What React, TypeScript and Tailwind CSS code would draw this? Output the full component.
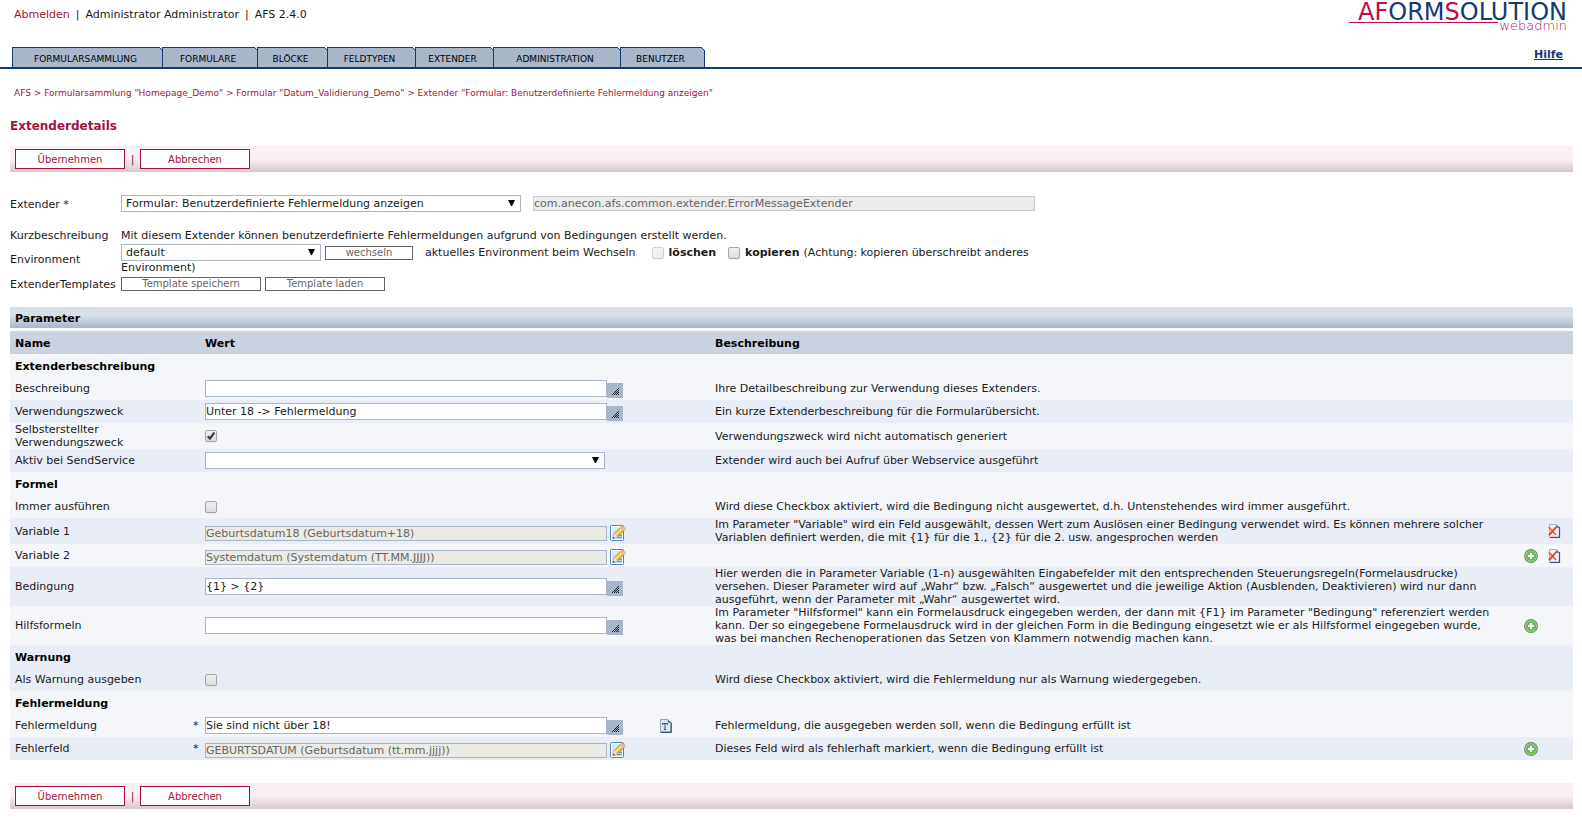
import React, { useState } from "react";

interface Tab {
  label: string;
  width: string;
}

type FieldKind =
  | "heading"
  | "text"
  | "select"
  | "checkbox"
  | "reference";

interface ParameterRow {
  id: string;
  label: string;
  kind: FieldKind;
  value?: string;
  checked?: boolean;
  required?: boolean;
  translatable?: boolean;
  description?: string;
  canAdd?: boolean;
  canDelete?: boolean;
  shaded?: boolean;
}

const TABS: Tab[] = [
  { label: "FORMULARSAMMLUNG", width: "w-[150px]" },
  { label: "FORMULARE", width: "w-[95px]" },
  { label: "BLÖCKE", width: "w-[70px]" },
  { label: "FELDTYPEN", width: "w-[88px]" },
  { label: "EXTENDER", width: "w-[78px]" },
  { label: "ADMINISTRATION", width: "w-[127px]" },
  { label: "BENUTZER", width: "w-[85px]" },
];

const BREADCRUMB = [
  "AFS",
  'Formularsammlung "Homepage_Demo"',
  'Formular "Datum_Validierung_Demo"',
  'Extender "Formular: Benutzerdefinierte Fehlermeldung anzeigen"',
];

const ROWS: ParameterRow[] = [
  { id: "h-extender", label: "Extenderbeschreibung", kind: "heading" },
  {
    id: "beschreibung",
    label: "Beschreibung",
    kind: "text",
    description: "Ihre Detailbeschreibung zur Verwendung dieses Extenders.",
  },
  {
    id: "verwendungszweck",
    label: "Verwendungszweck",
    kind: "text",
    value: "Unter 18 -> Fehlermeldung",
    description: "Ein kurze Extenderbeschreibung für die Formularübersicht.",
    shaded: true,
  },
  {
    id: "selbsterstellt",
    label: "Selbsterstellter Verwendungszweck",
    kind: "checkbox",
    checked: true,
    description: "Verwendungszweck wird nicht automatisch generiert",
  },
  {
    id: "sendservice",
    label: "Aktiv bei SendService",
    kind: "select",
    description: "Extender wird auch bei Aufruf über Webservice ausgeführt",
    shaded: true,
  },
  { id: "h-formel", label: "Formel", kind: "heading" },
  {
    id: "immer",
    label: "Immer ausführen",
    kind: "checkbox",
    description:
      "Wird diese Checkbox aktiviert, wird die Bedingung nicht ausgewertet, d.h. Untenstehendes wird immer ausgeführt.",
  },
  {
    id: "variable1",
    label: "Variable 1",
    kind: "reference",
    value: "Geburtsdatum18 (Geburtsdatum+18)",
    description:
      'Im Parameter "Variable" wird ein Feld ausgewählt, dessen Wert zum Auslösen einer Bedingung verwendet wird. Es können mehrere solcher Variablen definiert werden, die mit {1} für die 1., {2} für die 2. usw. angesprochen werden',
    canDelete: true,
    shaded: true,
  },
  {
    id: "variable2",
    label: "Variable 2",
    kind: "reference",
    value: "Systemdatum (Systemdatum (TT.MM.JJJJ))",
    canAdd: true,
    canDelete: true,
  },
  {
    id: "bedingung",
    label: "Bedingung",
    kind: "text",
    value: "{1} > {2}",
    description:
      "Hier werden die in Parameter Variable (1-n) ausgewählten Eingabefelder mit den entsprechenden Steuerungsregeln(Formelausdrucke) versehen. Dieser Parameter wird auf „Wahr“ bzw. „Falsch“ ausgewertet und die jeweilige Aktion (Ausblenden, Deaktivieren) wird nur dann ausgeführt, wenn der Parameter mit „Wahr“ ausgewertet wird.",
    shaded: true,
  },
  {
    id: "hilfsformeln",
    label: "Hilfsformeln",
    kind: "text",
    description:
      'Im Parameter "Hilfsformel" kann ein Formelausdruck eingegeben werden, der dann mit {F1} im Parameter "Bedingung" referenziert werden kann. Der so eingegebene Formelausdruck wird in der gleichen Form in die Bedingung eingesetzt wie er als Hilfsformel eingegeben wurde, was bei manchen Rechenoperationen das Setzen von Klammern notwendig machen kann.',
    canAdd: true,
  },
  { id: "h-warnung", label: "Warnung", kind: "heading", shaded: true },
  {
    id: "warnung",
    label: "Als Warnung ausgeben",
    kind: "checkbox",
    description:
      "Wird diese Checkbox aktiviert, wird die Fehlermeldung nur als Warnung wiedergegeben.",
    shaded: true,
  },
  { id: "h-fehler", label: "Fehlermeldung", kind: "heading" },
  {
    id: "fehlermeldung",
    label: "Fehlermeldung",
    kind: "text",
    value: "Sie sind nicht über 18!",
    required: true,
    translatable: true,
    description:
      "Fehlermeldung, die ausgegeben werden soll, wenn die Bedingung erfüllt ist",
  },
  {
    id: "fehlerfeld",
    label: "Fehlerfeld",
    kind: "reference",
    value: "GEBURTSDATUM (Geburtsdatum (tt.mm.jjjj))",
    required: true,
    description:
      "Dieses Feld wird als fehlerhaft markiert, wenn die Bedingung erfüllt ist",
    canAdd: true,
    shaded: true,
  },
];

function EditIcon() {
  return (
    <svg width="16" height="16" viewBox="0 0 16 16" aria-hidden="true">
      <defs>
        <linearGradient id="edit-page" x1="0" y1="0" x2="1" y2="1">
          <stop offset="0" stopColor="#e6f1fd" />
          <stop offset="1" stopColor="#a5d3fb" />
        </linearGradient>
      </defs>
      <rect x=".5" y=".5" width="13" height="15" rx="1" fill="#ffffff" stroke="#4a86cc" />
      <rect x="2" y="2" width="10" height="12" fill="url(#edit-page)" />
      <path d="M7 12.5h5M9 10.5h3" stroke="#3fa9ee" />
      <path d="M2.8 13.4l1.2-4.6L11 1.9c.8-.8 1.9-.7 2.6 0l.8.8c.7.8.7 1.7 0 2.5l-7 6.9z" fill="#f2b03a" stroke="#b8813a" strokeWidth=".7" />
      <path d="M4.6 9.6l6.6-6.5 1.3 1.3-6.6 6.5z" fill="#fbe08a" />
      <path d="M11 1.9c.8-.8 1.9-.7 2.6 0l.8.8c.7.8.7 1.7 0 2.5l-.9.9-3.4-3.3z" fill="#efb98a" />
      <path d="M2.8 13.4L4 8.8l3.4 3.3z" fill="#f8e2c0" />
      <path d="M2.8 13.4l.5-1.9 1.4 1.4z" fill="#4a3b2a" />
    </svg>
  );
}

function AddIcon() {
  return (
    <svg width="14" height="14" viewBox="0 0 14 14" aria-hidden="true">
      <defs>
        <linearGradient id="add-fill" x1="0" y1="0" x2="0" y2="1">
          <stop offset="0" stopColor="#7cae74" />
          <stop offset="1" stopColor="#62bd45" />
        </linearGradient>
      </defs>
      <circle cx="7" cy="7" r="6.4" fill="#b5d8a8" stroke="#5a9a50" strokeWidth="1.1" />
      <circle cx="7" cy="7" r="5.1" fill="url(#add-fill)" />
      <path d="M6 4h2v2h2v2H8v2H6V8H4V6h2z" fill="#ffffff" />
    </svg>
  );
}

function DeleteIcon() {
  return (
    <svg width="13" height="14" viewBox="0 0 13 14" aria-hidden="true">
      <path d="M1.5.5h6.8l3.2 3.2v9.3h-10z" fill="#eef3fb" stroke="#a3b3cf" />
      <path d="M8.3.5v3.2h3.2z" fill="#4b6186" />
      <path d="M11.5 3v10.5H2" fill="none" stroke="#3a5273" strokeWidth="1.2" />
      <path d="M.8 3.2l7.2 7.6" stroke="#f4694a" strokeWidth="1.9" />
      <path d="M8.2 3L1 11.4" stroke="#ea3d1f" strokeWidth="1.9" />
    </svg>
  );
}

function TranslateIcon() {
  return (
    <svg width="12" height="14" viewBox="0 0 12 14" aria-hidden="true">
      <path d="M.5.5h7.3l3.2 3.2V13H.5z" fill="#dfe8f4" stroke="#8fa3c2" />
      <path d="M7.8.5v3.2H11z" fill="#4b6186" />
      <path d="M11.2 3.8v9.5H.6" fill="none" stroke="#3a5273" strokeWidth="1.2" />
      <path d="M2.5 6V4.5h5V6M5 4.5v6M3.8 10.5h2.4" fill="none" stroke="#3c4f6d" />
    </svg>
  );
}

function ResizeIcon() {
  return (
    <svg width="7" height="7" viewBox="0 0 7 7" shapeRendering="crispEdges" aria-hidden="true">
      <path
        d="M6 0h1v1H6zM5 1h1v1H5zM4 2h1v1H4zM6 2h1v1H6zM3 3h1v1H3zM5 3h1v1H5zM2 4h1v1H2zM4 4h1v1H4zM6 4h1v1H6zM1 5h1v1H1zM3 5h1v1H3zM5 5h1v1H5zM0 6h1v1H0zM2 6h1v1H2zM4 6h1v1H4zM6 6h1v1H6z"
        fill="#14181f"
      />
    </svg>
  );
}

interface CheckboxProps {
  id: string;
  defaultChecked?: boolean;
  disabled?: boolean;
}

function Checkbox({ id, defaultChecked = false, disabled = false }: CheckboxProps) {
  return (
    <span className="relative inline-block h-3 w-3 align-middle">
      <input
        type="checkbox"
        id={id}
        defaultChecked={defaultChecked}
        disabled={disabled}
        className="peer block h-3 w-3 appearance-none rounded-xs border border-[#a6a6a6] bg-linear-to-b from-[#eeeeee] to-[#dcdcdc] shadow-xs disabled:border-[#d2d2d2] disabled:from-[#f4f4f4] disabled:to-[#ededed]"
      />
      <svg
        viewBox="0 0 12 12"
        aria-hidden="true"
        className="pointer-events-none absolute inset-0 hidden h-3 w-3 peer-checked:block"
      >
        <path d="M2.8 6.2l2.2 2.4 4.3-6" fill="none" stroke="#3c3c3c" strokeWidth="2.2" />
      </svg>
    </span>
  );
}

interface SelectBoxProps {
  id: string;
  options: string[];
  className: string;
}

function SelectBox({ id, options, className }: SelectBoxProps) {
  return (
    <span className={`relative inline-block align-middle ${className}`}>
      <select
        id={id}
        className="block h-[17px] w-full appearance-none border border-[#a9b6ca] bg-white pl-1 leading-[15px]"
      >
        {options.map((option) => (
          <option key={option}>{option}</option>
        ))}
      </select>
      <svg
        width="7"
        height="6"
        viewBox="0 0 7 6"
        aria-hidden="true"
        className="pointer-events-none absolute top-[5px] right-1.5"
      >
        <path d="M0 0h7L4 6H3z" fill="#000000" />
      </svg>
    </span>
  );
}

function ActionBar() {
  return (
    <div className="flex h-[26px] items-center bg-linear-to-b from-[#faeff3] from-50% to-[#d5c9cd] pl-[5px] text-[10px] text-[#a3123f]">
      <button type="button" className="h-5 w-[110px] border border-[#a3123f] bg-white">
        Übernehmen
      </button>
      <span className="w-[15px] text-center text-[11px]">|</span>
      <button type="button" className="h-5 w-[110px] border border-[#a3123f] bg-white">
        Abbrechen
      </button>
    </div>
  );
}

function FieldControl({ row }: { row: ParameterRow }) {
  if (row.kind === "select") {
    return <SelectBox id={row.id} options={[""]} className="w-[400px]" />;
  }
  if (row.kind === "checkbox") {
    return <Checkbox id={row.id} defaultChecked={row.checked} />;
  }
  if (row.kind === "reference") {
    return (
      <div className="flex items-end gap-[3px] pt-[3px]">
        <input
          type="text"
          id={row.id}
          disabled
          defaultValue={row.value}
          className="h-[15px] w-[402px] border border-[#a9b6ca] bg-[#ebebe4] text-[#666666]"
        />
        <button type="button" aria-label={`${row.label} bearbeiten`}>
          <EditIcon />
        </button>
      </div>
    );
  }
  return (
    <div className="flex items-center">
      <input
        type="text"
        id={row.id}
        defaultValue={row.value ?? ""}
        className="h-[17px] w-[402px] border border-[#a9b6ca] bg-white pb-px"
      />
      <button
        type="button"
        aria-label={`${row.label} vergrößern`}
        className="mt-1 flex h-[15px] w-4 items-end justify-end bg-[#a9b6ca] pr-1 pb-[3px]"
      >
        <ResizeIcon />
      </button>
    </div>
  );
}

function ParameterTable() {
  return (
    <table className="mt-[3px] w-full table-fixed border-collapse text-left">
      <colgroup>
        <col className="w-[177px]" />
        <col className="w-[18px]" />
        <col className="w-[450px]" />
        <col className="w-[60px]" />
        <col />
        <col className="w-6" />
        <col className="w-7" />
      </colgroup>
      <thead>
        <tr className="h-[23px] bg-[#cad1df] text-black">
          <th className="p-0 pt-px pl-[5px]" colSpan={2}>Name</th>
          <th className="p-0 pt-px">Wert</th>
          <th className="p-0" />
          <th className="p-0 pt-px">Beschreibung</th>
          <th className="p-0" colSpan={2} />
        </tr>
      </thead>
      <tbody>
        {ROWS.map((row) => {
          const background = row.shaded ? "bg-[#e8edf6]" : "bg-[#f4f6fa]";

          if (row.kind === "heading") {
            return (
              <tr key={row.id} className={`h-[23px] text-black ${background}`}>
                <th colSpan={7} className="p-0 pt-px pl-[5px]">{row.label}</th>
              </tr>
            );
          }

          return (
            <tr key={row.id} className={`h-[23px] ${background}`}>
              <td className="p-0 pr-8 pl-[5px]">
                <label htmlFor={row.id} className="block">{row.label}</label>
              </td>
              <td className="p-0 pl-1.5">{row.required ? "*" : null}</td>
              <td className="p-0 leading-3">
                <FieldControl row={row} />
              </td>
              <td className="p-0 pl-[5px]">
                {row.translatable && (
                  <button type="button" aria-label="Übersetzen" className="block">
                    <TranslateIcon />
                  </button>
                )}
              </td>
              <td className="p-0 pr-6">{row.description}</td>
              <td className="p-0 pl-[3px]">
                {row.canAdd && (
                  <button type="button" aria-label={`${row.label} hinzufügen`} className="block">
                    <AddIcon />
                  </button>
                )}
              </td>
              <td className="p-0 pl-[3px]">
                {row.canDelete && (
                  <button type="button" aria-label={`${row.label} löschen`} className="block">
                    <DeleteIcon />
                  </button>
                )}
              </td>
            </tr>
          );
        })}
      </tbody>
    </table>
  );
}

function Logo() {
  return (
    <div className="w-[218px] text-[#c00d45]">
      <div className="flex justify-end text-2xl leading-5 text-[#143a73]">
        <span className="text-[#c00d45]">A</span>
        <span className="text-[#c00d45]">F</span>
        <span>ORM</span>
        <span className="text-[#c00d45]">S</span>
        <span>OLUTION</span>
      </div>
      <div className="flex items-start text-[13px] leading-[7px] font-extralight">
        <span className="mr-px h-px flex-1 bg-[#c00d45]" />
        <span>webadmin</span>
      </div>
    </div>
  );
}

export default function App() {
  const [activeTab, setActiveTab] = useState("EXTENDER");

  return (
    <div className="bg-white pb-3 font-['DejaVu_Sans',Verdana,sans-serif] text-[11px] leading-[13px] text-[#1a1a1a]">
      <header className="flex h-[69px] items-stretch justify-between border-b-2 border-[#143a73]">
        <div className="flex flex-col justify-between">
          <div className="flex gap-1.5 pt-2 pl-[14px]">
            <a href="#abmelden" className="text-[#a3123f]">Abmelden</a>
            <span>|</span>
            <span>Administrator Administrator</span>
            <span>|</span>
            <span>AFS 2.4.0</span>
          </div>
          <nav className="flex pl-3">
            {TABS.map((tab) => (
              <button
                key={tab.label}
                type="button"
                aria-current={tab.label === activeTab ? "page" : undefined}
                onClick={() => setActiveTab(tab.label)}
                className={`relative h-5 border-t border-l border-[#143a73] bg-[#a9b6ca] pt-1 pr-1 text-[9px] text-black last:border-r ${tab.width}`}
              >
                {tab.label}
                <svg
                  width="4"
                  height="4"
                  viewBox="0 0 4 4"
                  aria-hidden="true"
                  className="absolute -top-px -right-px"
                >
                  <path d="M0 0h4v4z" fill="#ffffff" />
                  <path d="M0 0l4 4" stroke="#143a73" />
                </svg>
              </button>
            ))}
          </nav>
        </div>
        <div className="flex flex-col items-end justify-between pt-0.5 pr-[15px] pb-1.5">
          <Logo />
          <a href="#hilfe" className="pr-1 font-bold text-[#143a73] underline">Hilfe</a>
        </div>
      </header>

      <nav aria-label="Pfad" className="mt-[18px] pl-[14px] text-[9px] text-[#a3123f]">
        {BREADCRUMB.map((item, index) => (
          <React.Fragment key={item}>
            {index > 0 && " > "}
            <a href="#pfad">{item}</a>
          </React.Fragment>
        ))}
      </nav>

      <main className="mt-5 pr-[9px] pl-2.5">
        <h1 className="mb-[13px] text-xs leading-[13px] font-bold text-[#a3123f]">Extenderdetails</h1>
        <ActionBar />

        <div className="mt-[23px] grid grid-cols-[111px_1fr] items-center">
          <label htmlFor="extender" className="pt-0.5">Extender *</label>
          <div className="flex items-center gap-3">
            <SelectBox
              id="extender"
              options={["Formular: Benutzerdefinierte Fehlermeldung anzeigen"]}
              className="w-[400px]"
            />
            <input
              type="text"
              aria-label="Klasse"
              disabled
              defaultValue="com.anecon.afs.common.extender.ErrorMessageExtender"
              className="h-[15px] w-[502px] border border-[#c8c8c8] bg-[#ececec] text-[#666666]"
            />
          </div>

          <span className="mt-[17px]">Kurzbeschreibung</span>
          <p className="mt-[17px]">
            Mit diesem Extender können benutzerdefinierte Fehlermeldungen aufgrund von Bedingungen erstellt werden.
          </p>

          <label htmlFor="environment" className="pt-0.5">Environment</label>
          <div className="mt-0.5 flex max-w-[930px] flex-wrap items-center">
            <SelectBox id="environment" options={["default"]} className="mr-1 w-[200px]" />
            <button
              type="button"
              className="mr-3 h-3.5 w-[88px] border border-[#666666] bg-white text-[10px] leading-3 text-[#666666]"
            >
              wechseln
            </button>
            <span className="mr-4">aktuelles Environment beim Wechseln</span>
            <Checkbox id="loeschen" disabled />
            <label htmlFor="loeschen" className="mr-3 ml-[5px] font-bold">löschen</label>
            <Checkbox id="kopieren" />
            <label htmlFor="kopieren" className="mr-1 ml-[5px] font-bold">kopieren</label>
            <span>(Achtung: kopieren überschreibt anderes</span>
            <span className="basis-full">Environment)</span>
          </div>

          <span className="mt-[3px] whitespace-nowrap">ExtenderTemplates</span>
          <div className="mt-[3px] flex gap-1 text-[10px] leading-3 text-[#666666]">
            <button type="button" className="h-3.5 w-[140px] border border-[#666666] bg-white">
              Template speichern
            </button>
            <button type="button" className="h-3.5 w-[120px] border border-[#666666] bg-white">
              Template laden
            </button>
          </div>
        </div>

        <section className="mt-4 mb-[23px]">
          <h2 className="bg-linear-to-b from-[#d8dfe7] from-40% to-[#a9b6ca] pt-[5px] pb-[3px] pl-[5px] font-bold text-black">
            Parameter
          </h2>
          <ParameterTable />
        </section>

        <ActionBar />
      </main>
    </div>
  );
}
